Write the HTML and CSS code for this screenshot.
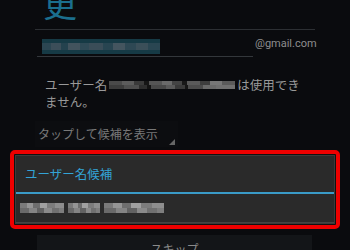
FILE: index.html
```html
<!DOCTYPE html>
<html lang="ja">
<head>
<meta charset="utf-8">
<link rel="stylesheet" href="styles.css">
</head>
<body>
<div class="page">
  <h1 class="title">更</h1>
  <div class="rule"></div>
  <div class="email-row">
    <div class="email-field"><span class="blur-email"></span></div>
    <span class="domain">@gmail.com</span>
  </div>
  <p class="error">ユーザー名<span class="blur-name"></span>は使用できません。</p>
  <div class="spinner">タップして候補を表示</div>
  <div class="suggest">
    <div class="panel">
      <div class="panel-head">ユーザー名候補</div>
      <div class="panel-row">
        <span class="blur-word w1"></span>
        <span class="blur-word w2"></span>
        <span class="blur-word w3"></span>
      </div>
    </div>
  </div>
  <div class="skip">スキップ</div>
</div>
</body>
</html>
```

FILE: styles.css
```css
* { box-sizing: border-box; }
html, body { margin: 0; padding: 0; }
body {
  width: 350px;
  height: 250px;
  overflow: hidden;
  background: #0a0b0e;
  font-family: "Noto Sans CJK JP", "Noto Sans", sans-serif;
}
.page { display: flex; flex-direction: column; align-items: flex-start; }

.title {
  margin: -14px 0 0 43px;
  height: 34px;
  font-size: 34px;
  line-height: 34px;
  font-weight: 400;
  color: #1b6f8e;
}
.rule {
  margin: 9px 0 0 35px;
  width: 280px;
  height: 1px;
  background: #2c2f33;
}

.email-row { display: flex; align-items: flex-start; margin-left: 37px; }
.email-field {
  width: 216px;
  height: 27px;
  padding: 9px 0 0 5px;
  border-bottom: 1px solid #33373b;
}
.blur-email {
  display: block;
  width: 118px;
  height: 15px;
  background:
    linear-gradient(180deg, #163a45 0 4px, transparent 4px 11px, #163a45 11px),
    linear-gradient(90deg, #2c4652 0 8%, #3c4e59 8% 16%, #24424e 16% 22%, #42535d 22% 32%, #2f4a56 32% 40%, #3a4d58 40% 52%, #284551 52% 60%, #44555f 60% 70%, #2e4854 70% 80%, #3b4f59 80% 90%, #2a4652 90%);
}
.domain {
  margin: 7px 0 0 2px;
  font-family: Roboto, "Liberation Sans", sans-serif;
  font-size: 11px;
  line-height: 13px;
  color: #8e8e8e;
}

.error {
  margin: 19px 0 0 45px;
  width: 264px;
  font-size: 12.5px;
  line-height: 17px;
  color: #999999;
}
.blur-name {
  display: inline-block;
  width: 126px;
  height: 8px;
  margin: 0 2px;
  vertical-align: 1px;
  background:
    linear-gradient(90deg, #4a4a4a 0 10%, #5c5c5c 10% 20%, #3a3a3a 20% 28%, #161616 28% 32%, #555 32% 42%, #6a6a6a 42% 50%, #444 50% 58%, #181818 58% 62%, #5a5a5a 62% 72%, #3e3e3e 72% 80%, #777 80% 90%, #5a5a5a 90% 100%) top / 100% 50% no-repeat,
    linear-gradient(90deg, #3c3c3c 0 12%, #4e4e4e 12% 24%, #2e2e2e 24% 30%, #141414 30% 33%, #484848 33% 45%, #5a5a5a 45% 52%, #3a3a3a 52% 60%, #161616 60% 63%, #4c4c4c 63% 75%, #6a6a6a 75% 85%, #707070 85% 100%) bottom / 100% 50% no-repeat;
}

.spinner {
  position: relative;
  margin: 11px 0 0 35px;
  width: 143px;
  height: 26px;
  padding-left: 3px;
  font-size: 12px;
  line-height: 26px;
  color: #787878;
  background: #0c0d10;
}
.spinner::after {
  content: "";
  position: absolute;
  right: 3px;
  bottom: 2px;
  width: 0;
  height: 0;
  border-left: 6px solid transparent;
  border-bottom: 6px solid #666666;
}

.suggest {
  margin: 3px 0 0 10px;
  width: 330px;
  border: 4px solid #ee0000;
  border-radius: 5px;
  padding: 1px;
  background: #111111;
}
.panel {
  background: #2a2a2a;
  border: 1px solid #3b3b3b;
}
.panel-head {
  height: 38px;
  padding-left: 9px;
  font-size: 12.5px;
  line-height: 36px;
  color: #33a3d6;
  border-bottom: 2px solid #3a9bc8;
}
.panel-row {
  display: flex;
  align-items: center;
  gap: 4px;
  height: 29px;
  padding: 0 0 1px 4px;
  border-bottom: 1px solid #444444;
}
.blur-word {
  display: block;
  height: 10px;
  background:
    linear-gradient(90deg, #7a7a7a 0 15%, #959595 15% 30%, #6e6e6e 30% 45%, #a0a0a0 45% 62%, #7c7c7c 62% 80%, #8e8e8e 80% 100%) top / 100% 50% no-repeat,
    linear-gradient(90deg, #6a6a6a 0 20%, #848484 20% 38%, #626262 38% 55%, #8a8a8a 55% 72%, #707070 72% 88%, #7e7e7e 88% 100%) bottom / 100% 50% no-repeat;
}
.w1 { width: 44px; }
.w2 { width: 32px; }
.w3 { width: 60px; }

.skip {
  margin: 6px 0 0 37px;
  width: 275px;
  height: 40px;
  padding-top: 6px;
  text-align: center;
  font-size: 12px;
  line-height: 16px;
  color: #8a8a8a;
  background: #131518;
}
```
